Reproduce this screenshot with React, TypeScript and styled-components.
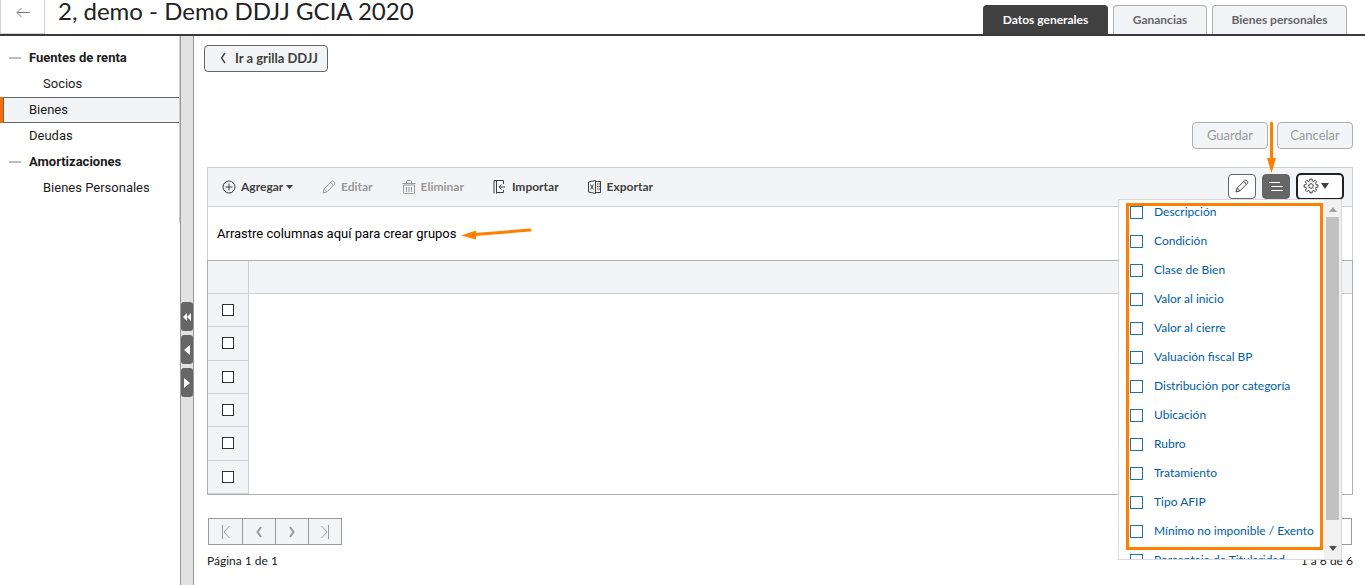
import React from "react";
import styled, { createGlobalStyle, css } from "styled-components";

const UI = `Lato, "Noto Sans", sans-serif`;
const TEXT = `Roboto, Arial, sans-serif`;

const GlobalStyle = createGlobalStyle`
  * { box-sizing: border-box; }
  body { margin: 0; background: #fff; color: #212223; font: 12px/16px ${UI}; }
  button, input, select { font: inherit; color: inherit; margin: 0; }
`;

const Page = styled.div`
  display: flex;
  flex-direction: column;
  min-height: 100vh;
`;

/* Header */
const Header = styled.header`
  display: flex;
  flex: none;
  height: 36px;
  border-bottom: 2px solid #3a3a3e;
`;
const BackButton = styled.button`
  display: flex;
  align-items: center;
  justify-content: center;
  width: 45px;
  height: 34px;
  padding: 0 0 9px;
  border: 1px solid #d0d0d0;
  border-top: 0;
  background: #fff;
  color: #7b7b7b;
`;
const Title = styled.h1`
  flex: 1;
  margin: 0;
  padding-left: 13px;
  font-size: 24px;
  font-weight: 400;
  line-height: 22px;
  color: #212223;
  white-space: nowrap;
`;
const Tabs = styled.nav`
  display: flex;
  align-items: flex-end;
  gap: 5px;
  padding-right: 18px;
`;
const Tab = styled.button<{ $active?: boolean; $width: number }>`
  width: ${(p) => p.$width}px;
  height: 29px;
  padding: 0;
  border: 1px solid #afafaf;
  border-bottom: 0;
  border-radius: 4px 4px 0 0;
  background: #f3f4f6;
  color: #666;
  font-weight: 700;
  ${(p) => p.$active && css`
    background: #404040;
    border-color: #404040;
    color: #fff;
  `}
`;

/* Body */
const Body = styled.div`
  display: flex;
  flex: 1;
`;
const Sidebar = styled.div`
  flex: none;
  width: 180px;
`;
const NavList = styled.nav`
  height: 187px;
  padding-top: 9px;
  border-right: 1px solid #cfcfcf;
  font: 13px/26px ${TEXT};
`;
const NavItem = styled.a<{ $level?: number; $group?: boolean; $selected?: boolean }>`
  display: flex;
  align-items: center;
  height: 26px;
  padding-left: ${(p) => (p.$group ? 9 : p.$level === 2 ? 43 : 29)}px;
  color: #1b1b1b;
  text-decoration: none;
  font-weight: ${(p) => (p.$group ? 700 : 400)};
  ${(p) => p.$selected && css`
    padding-left: 26px;
    border: solid #666;
    border-width: 1px 0;
    background: linear-gradient(to right, #666 1px, #f3f4f6 1px);
    margin-left: 3px;
  `}
`;
const SelectedRow = styled.div`
  background: #ff6a00;
`;
const Dash = styled.span`
  width: 12px;
  height: 2px;
  margin-right: 8px;
  background: #bdbdbd;
`;
const Splitter = styled.div`
  display: flex;
  flex: none;
  flex-direction: column;
  gap: 4px;
  width: 14px;
  padding-top: 266px;
  border: solid #999;
  border-width: 0 1px;
  background: #e2e2e2;
`;
const SplitButton = styled.button`
  display: flex;
  align-items: center;
  justify-content: center;
  width: 12px;
  height: 29px;
  padding: 0;
  border: 0;
  border-radius: 3px;
  background: #666;
  color: #fff;
`;
const Main = styled.main`
  flex: 1;
  min-width: 0;
  padding: 9px 12px 0 13px;
`;

const OutlineButton = styled.button<{ $strong?: boolean }>`
  display: flex;
  align-items: center;
  justify-content: center;
  gap: 8px;
  min-width: 76px;
  height: 27px;
  padding: ${(p) => (p.$strong ? "0 9px 2px 14px" : "0 12px 2px")};
  border: 1px solid ${(p) => (p.$strong ? "#666" : "#afafaf")};
  border-radius: 4px;
  background: #f3f4f6;
  color: ${(p) => (p.$strong ? "#404040" : "#999")};
  font-size: 13px;
  font-weight: ${(p) => (p.$strong ? 700 : 400)};
`;
const TopRow = styled.div`
  display: flex;
  margin-left: -3px;
`;
const ActionRow = styled.div`
  display: flex;
  justify-content: flex-end;
  gap: 9px;
  margin-top: 50px;
`;

/* Grid */
const Toolbar = styled.div`
  display: flex;
  align-items: center;
  height: 40px;
  margin-top: 18px;
  padding: 0 8px 0 14px;
  border: 1px solid #cfcfcf;
  background: #f3f4f6;
`;
const Tools = styled.div`
  display: flex;
  flex: 1;
  gap: 29px;
`;
const Tool = styled.button`
  display: flex;
  align-items: center;
  padding: 0;
  border: 0;
  background: none;
  color: #404040;
  font-weight: 700;
  &:disabled { color: #999; }
  svg:first-child { margin-right: 5px; }
`;
const IconTools = styled.div`
  display: flex;
  gap: 6px;
  padding-bottom: 2px;
`;
const IconButton = styled.button<{ $dark?: boolean }>`
  display: flex;
  align-items: center;
  justify-content: center;
  width: 28px;
  height: 25px;
  padding: 0;
  border: 1px solid #666;
  border-radius: 4px;
  background: ${(p) => (p.$dark ? "#666" : "#fff")};
  color: ${(p) => (p.$dark ? "#fff" : "#404040")};
`;
const MenuAnchor = styled.div`
  position: relative;
  margin: -1px 0;
`;
const GearButton = styled.button`
  display: flex;
  align-items: center;
  gap: 2px;
  width: 48px;
  height: 27px;
  padding: 0 5px;
  border: 2px solid #212223;
  border-radius: 5px;
  background: #fff;
  color: #404040;
`;
const Menu = styled.div`
  position: absolute;
  z-index: 2;
  top: 26px;
  right: 2px;
  display: flex;
  width: 224px;
  height: 361px;
  border: 1px solid #d9d9d9;
  background: #fff;
`;
const MenuList = styled.div`
  flex: 1;
  overflow: hidden;
`;
const MenuItems = styled.div`
  margin-top: -2px;
`;
const MenuItem = styled.label`
  display: flex;
  align-items: center;
  gap: 11px;
  height: 29px;
  padding-left: 11px;
  color: #005da2;
  white-space: nowrap;
`;
const Check = styled.input<{ $grid?: boolean }>`
  appearance: none;
  display: block;
  flex: none;
  width: ${(p) => (p.$grid ? 12 : 13)}px;
  height: ${(p) => (p.$grid ? 12 : 13)}px;
  margin: ${(p) => (p.$grid ? "0 auto" : "0")};
  border: 1px solid ${(p) => (p.$grid ? "#333" : "#1a73ad")};
  background: #fff;
`;
const ScrollBar = styled.div`
  display: flex;
  flex-direction: column;
  align-items: center;
  width: 17px;
  padding: 7px 0;
  background: #f1f1f1;
  color: #505050;
`;
const Thumb = styled.div`
  width: 13px;
  height: 303px;
  margin: 5px 0 26px;
  background: #c1c1c1;
`;
const MenuFrame = styled.div`
  position: absolute;
  inset: 3px auto auto 7px;
  width: 197px;
  height: 347px;
  border: 3px solid #ff8000;
  pointer-events: none;
`;
const DownArrow = styled.svg`
  position: absolute;
  z-index: 3;
  top: -53px;
  left: -33px;
`;
const GroupZone = styled.div`
  display: flex;
  align-items: center;
  gap: 4px;
  height: 53px;
  padding-left: 9px;
  border: solid #cfcfcf;
  border-width: 0 1px;
  font: 13px/16px ${TEXT};
  color: #000;
`;
const Grid = styled.table`
  width: 100%;
  height: 235px;
  border: 1px solid #afafaf;
  border-spacing: 0;
  th, td { height: 33px; padding: 0; border-bottom: 1px solid #cfcfcf; }
  th { background: #f3f4f6; }
  td + td { border-bottom: 0; }
  th:first-child, td:first-child {
    width: 41px;
    border-right: 1px solid #cfcfcf;
    background: #f3f4f6;
  }
`;

/* Pager */
const Pager = styled.div`
  display: flex;
  justify-content: space-between;
  margin-top: 23px;
  padding: 0 1px;
`;
const PagerButtons = styled.div`
  display: flex;
  border: 1px solid #999;
`;
const PageButton = styled.button`
  display: flex;
  align-items: center;
  justify-content: center;
  width: 33px;
  height: 25px;
  padding: 0;
  border: 0;
  background: #f3f4f6;
  color: #999;
  & + & { border-left: 1px solid #999; }
`;
const PageSize = styled.select`
  width: 64px;
  height: 27px;
  padding: 0 8px;
  appearance: none;
  border: 1px solid #999;
  background: #fff;
`;
const PagerInfo = styled.div`
  display: flex;
  justify-content: space-between;
  margin-top: 8px;
`;

type IconProps = { children: React.ReactNode; w?: number; h?: number; sw?: number };
const Icon = ({ children, w = 14, h = 14, sw = 1 }: IconProps) => (
  <svg width={w} height={h} viewBox={`0 0 ${w} ${h}`} fill="none" stroke="currentColor" strokeWidth={sw} aria-hidden="true">
    {children}
  </svg>
);
const Pencil = () => (
  <Icon>
    <path d="M1 13l1.200-4 7.600-7.600q.9-.8 1.800 0l.9.9q.8.9 0 1.800L5 11.800zM2.200 9L5 11.800M8.700 2.500l2.800 2.800" />
  </Icon>
);
const Caret = ({ w, h }: { w: number; h: number }) => (
  <svg width={w} height={h} viewBox="0 0 10 6" preserveAspectRatio="none" aria-hidden="true"><path d="M0 0h10L5 6z" fill="currentColor" /></svg>
);
const Gear = () => {
  const pts: string[] = [];
  for (let i = 0; i < 8; i++) {
    const at = (deg: number, r: number) => {
      const a = ((i * 45 + deg) * Math.PI) / 180;
      return `${(8 + r * Math.cos(a)).toFixed(2)} ${(8 + r * Math.sin(a)).toFixed(2)}`;
    };
    pts.push(at(-14, 5.2), at(-9, 7), at(9, 7), at(14, 5.2));
  }
  return (
    <Icon w={16} h={16}>
      <path d={`M${pts.join("L")}Z`} strokeLinejoin="round" />
      <circle cx="8" cy="8" r="2.3" />
    </Icon>
  );
};

const columns = [
  "Descripción", "Condición", "Clase de Bien", "Valor al inicio", "Valor al cierre", "Valuación fiscal BP",
  "Distribución por categoría", "Ubicación", "Rubro", "Tratamiento", "Tipo AFIP", "Mínimo no imponible / Exento",
  "Porcentaje de Titularidad",
];

export default function App() {
  return (
    <Page>
      <GlobalStyle />
      <Header>
        <BackButton aria-label="Volver">
          <Icon w={14} h={12}><path d="M14 6.500H1M5.500 2L1 6.500l4.500 4.500" /></Icon>
        </BackButton>
        <Title>2, demo - Demo DDJJ GCIA 2020</Title>
        <Tabs>
          <Tab $active $width={125}>Datos generales</Tab>
          <Tab $width={94}>Ganancias</Tab>
          <Tab $width={135}>Bienes personales</Tab>
        </Tabs>
      </Header>
      <Body>
        <Sidebar>
          <NavList>
            <NavItem href="#fuentes" $group><Dash />Fuentes de renta</NavItem>
            <NavItem href="#socios" $level={2}>Socios</NavItem>
            <SelectedRow><NavItem href="#bienes" $selected>Bienes</NavItem></SelectedRow>
            <NavItem href="#deudas">Deudas</NavItem>
            <NavItem href="#amortizaciones" $group><Dash />Amortizaciones</NavItem>
            <NavItem href="#personales" $level={2}>Bienes Personales</NavItem>
          </NavList>
        </Sidebar>
        <Splitter>
          <SplitButton aria-label="Contraer todo">
            <Icon w={10} h={8}><path d="M5 0v8L1 4zM9 0v8L5 4z" fill="currentColor" stroke="none" /></Icon>
          </SplitButton>
          <SplitButton aria-label="Contraer">
            <Icon w={8} h={10}><path d="M7 0v10L1 5z" fill="currentColor" stroke="none" /></Icon>
          </SplitButton>
          <SplitButton aria-label="Expandir">
            <Icon w={8} h={10}><path d="M1 0v10l6-5z" fill="currentColor" stroke="none" /></Icon>
          </SplitButton>
        </Splitter>
        <Main>
          <TopRow>
            <OutlineButton $strong>
              <Icon w={8} h={12} sw={1.4}><path d="M6 1L2.500 6 6 11" /></Icon>
              Ir a grilla DDJJ
            </OutlineButton>
          </TopRow>
          <ActionRow>
            <OutlineButton disabled>Guardar</OutlineButton>
            <OutlineButton disabled>Cancelar</OutlineButton>
          </ActionRow>
          <Toolbar>
            <Tools>
              <Tool>
                <Icon><circle cx="7" cy="7" r="6" /><path d="M7 3.500v7M3.500 7h7" /></Icon>
                Agregar&nbsp;<Caret w={7} h={4} />
              </Tool>
              <Tool disabled><Pencil />Editar</Tool>
              <Tool disabled>
                <Icon>
                  <path d="M.5 3.500h13M4.500 3V1.500q0-1 1-1h3q1 0 1 1V3M1.500 5v7.500q0 1 1 1h9q1 0 1-1V5zM4.500 7v5M7 7v5M9.500 7v5" />
                </Icon>
                Eliminar
              </Tool>
              <Tool>
                <Icon><path d="M1 .5v13M3.500 .5v13M1 .5h9.500V4M10.500 10v2.500h-7M12 7H6M8.500 4.500L6 7l2.500 2.500" /></Icon>
                Importar
              </Tool>
              <Tool>
                <Icon><path d="M.5 2l7-1.500v13L.5 12zM7.500 1.500h5v11h-5M2.500 4.500l3 5M5.500 4.500l-3 5M9 4h1M9 6.500h1M9 9h1M10.500 4h2M10.500 6.500h2M10.500 9h2" /></Icon>
                Exportar
              </Tool>
            </Tools>
            <IconTools>
              <IconButton aria-label="Editar vista"><Pencil /></IconButton>
              <IconButton $dark aria-label="Columnas">
                <Icon w={14} h={10} sw={1}><path d="M0 1.500h11M2 5.500h12M2 9.500h12" /></Icon>
              </IconButton>
              <MenuAnchor>
                <GearButton aria-label="Configuración"><Gear /><Caret w={8} h={6} /></GearButton>
                <DownArrow width="18" height="54" viewBox="0 0 18 54" aria-hidden="true">
                  <path d="M8.500 3v36" stroke="#ff8000" strokeWidth="3" strokeLinecap="round" />
                  <path d="M4 38h9L8.500 53z" fill="#ff8000" />
                </DownArrow>
                <Menu>
                  <MenuList>
                    <MenuItems>
                      {columns.map((c) => (
                        <MenuItem key={c}><Check type="checkbox" />{c}</MenuItem>
                      ))}
                    </MenuItems>
                  </MenuList>
                  <ScrollBar>
                    <Icon w={8} h={5}><path d="M4 0l4 5H0z" fill="#a3a3a3" stroke="none" /></Icon>
                    <Thumb />
                    <Icon w={8} h={5}><path d="M4 5l4-5H0z" fill="currentColor" stroke="none" /></Icon>
                  </ScrollBar>
                  <MenuFrame />
                </Menu>
              </MenuAnchor>
            </IconTools>
          </Toolbar>
          <GroupZone>
            Arrastre columnas aquí para crear grupos
            <svg width="74" height="14" viewBox="0 0 74 14" aria-hidden="true">
              <path d="M15 7.500L70 3" stroke="#ff8000" strokeWidth="3" strokeLinecap="round" />
              <path d="M1 8.500l15-5v9z" fill="#ff8000" />
            </svg>
          </GroupZone>
          <Grid>
            <thead><tr><th /><th /></tr></thead>
            <tbody>
              {[1, 2, 3, 4, 5, 6].map((n) => (
                <tr key={n}>
                  <td><Check $grid type="checkbox" aria-label={`Fila ${n}`} /></td>
                  <td />
                </tr>
              ))}
            </tbody>
          </Grid>
          <Pager>
            <PagerButtons>
              <PageButton aria-label="Primera"><Icon w={10} h={14}><path d="M1.500 0v14M8.500 1L3 7l5.500 6" /></Icon></PageButton>
              <PageButton aria-label="Anterior"><Icon w={10} h={14} sw={2}><path d="M7 2L3.500 7 7 12" /></Icon></PageButton>
              <PageButton aria-label="Siguiente"><Icon w={10} h={14} sw={2}><path d="M3 2l3.500 5L3 12" /></Icon></PageButton>
              <PageButton aria-label="Última"><Icon w={10} h={14}><path d="M8.500 0v14M1.500 1L7 7l-5.500 6" /></Icon></PageButton>
            </PagerButtons>
            <PageSize aria-label="Filas por página"><option>20</option></PageSize>
          </Pager>
          <PagerInfo><span>Página 1 de 1</span><span>1 a 6 de 6</span></PagerInfo>
        </Main>
      </Body>
    </Page>
  );
}
